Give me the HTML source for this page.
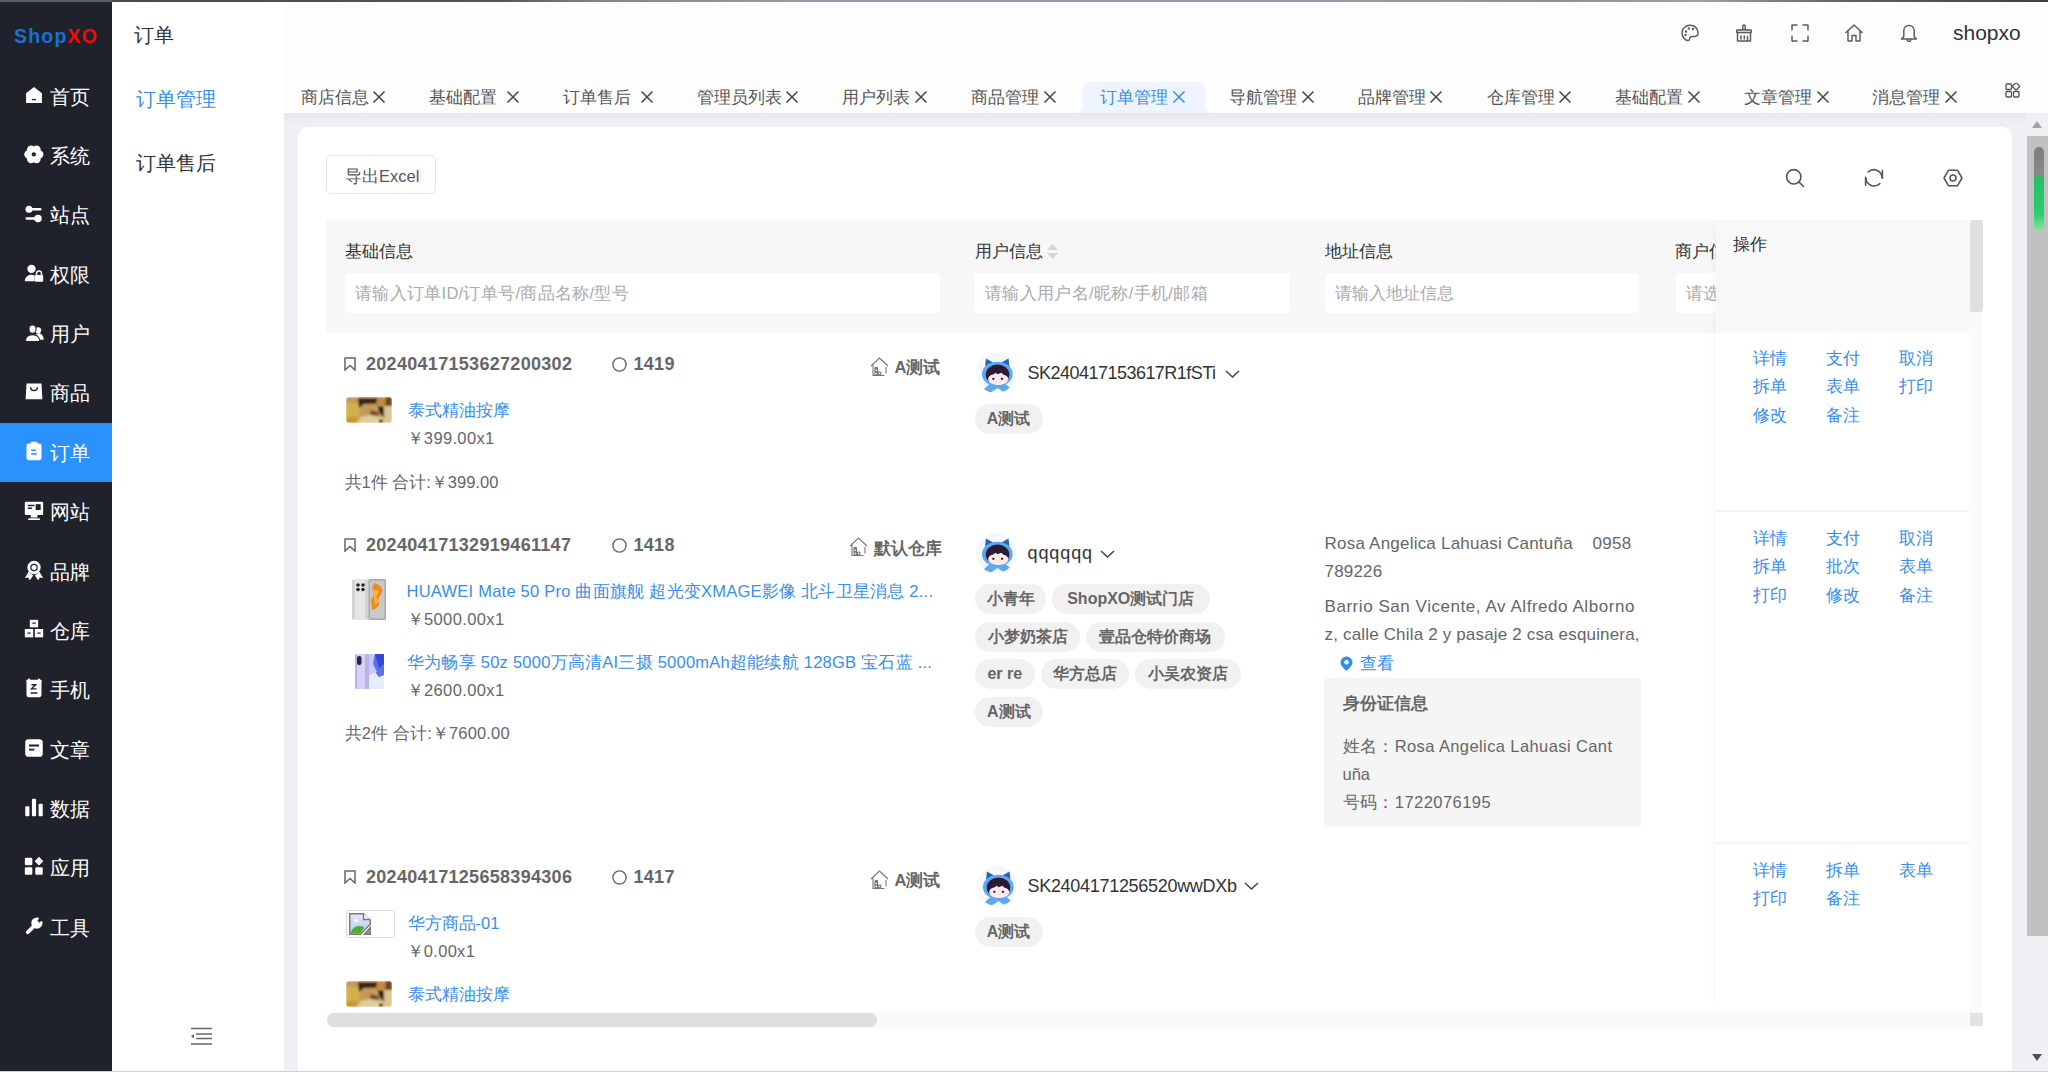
<!DOCTYPE html>
<html><head><meta charset="utf-8">
<style>
*{box-sizing:border-box;margin:0;padding:0}
html,body{width:2048px;height:1072px;overflow:hidden;background:#fff;font-family:"Liberation Sans",sans-serif;color:#333}
.a{position:absolute;white-space:nowrap}
#topline{left:0;top:0;width:2048px;height:2px;background:linear-gradient(90deg,#5a5d64 0,#5a5d64 112px,#4a4a4c 113px,#555 500px,#858585 600px,#9a98aa 800px,#9a98aa 1350px,#8f8f95 1550px,#a0a0a0 1700px,#606060 1850px,#404040 2048px)}
#botline{left:0;top:1071px;width:2048px;height:1px;background:#cfd0d2}
#side{left:0;top:2px;width:112px;height:1069px;background:#1f222b}
#logo{left:14px;top:23px;font-weight:bold;font-size:19.5px;letter-spacing:1.2px;-webkit-text-stroke:0}
.mi{left:0;width:112px;height:59.4px;color:#fff;font-size:20px}
.mi svg{position:absolute;left:23.5px;top:18px;width:20px;height:20px;fill:#fff}
.mi span{position:absolute;left:50px;top:18px;line-height:24px}
.mi.act{background:#2b91fd}
#sub{left:112px;top:2px;width:172px;height:1069px;background:#fff}
#hdr{left:284px;top:2px;width:1764px;height:111px;background:#fdfdfe}
#gray{left:284px;top:113px;width:1764px;height:958px;background:linear-gradient(#e8e8ec 0,#f0f0f4 12px)}
#card{left:298px;top:127px;width:1714px;height:960px;background:#fff;border-radius:10px}

.subt{font-size:20px;line-height:24px;color:#333}
.tab{top:86px;font-size:16.5px;line-height:22px;color:#555}
.tab .x{position:absolute;top:4px;width:14px;height:14px}
.hico{top:24px;width:18px;height:18px;fill:none;stroke:#5a5a5a;stroke-width:1.45;stroke-linecap:round;stroke-linejoin:round}

.t17{font-size:16.5px;line-height:22px}
.th{top:240px;font-size:16.5px;line-height:22px;color:#333}
.inp{top:273px;height:40px;background:#fff;border-radius:4px}
.ph{position:absolute;left:10px;top:9px;font-size:16.5px;line-height:22px;color:#aaa;white-space:nowrap}
.lk{color:#3a8ee6;font-size:16.5px;line-height:22px}
.gt{color:#666;font-size:16.5px;line-height:22px}
.onum{font-weight:bold;color:#666;font-size:18px;line-height:22px;letter-spacing:0.3px}
.tag{height:30px;border-radius:15px;background:#f1f1f1;color:#666;font-weight:bold;font-size:16px;line-height:30px;text-align:center}
.uname{font-size:18px;line-height:24px;color:#333}
</style></head><body>
<div class="a" id="topline"></div>
<div class="a" id="side">
  <div class="a" id="logo"><span style="color:#1670d6">Shop</span><span style="color:#f00a0a">XO</span></div>
  <div class="a mi" style="top:64.6px"><svg viewBox="0 0 24 24"><path d="M12 2.5 2.5 10v11.5h19V10z" /><path d="M9.5 17.5h5" stroke="#1f222b" stroke-width="1.6" fill="none"/></svg><span>首页</span></div>
  <div class="a mi" style="top:124.0px"><svg viewBox="0 0 24 24"><circle cx="18.30" cy="12.40" r="5"/><circle cx="15.05" cy="18.03" r="5"/><circle cx="8.55" cy="18.03" r="5"/><circle cx="5.30" cy="12.40" r="5"/><circle cx="8.55" cy="6.77" r="5"/><circle cx="15.05" cy="6.77" r="5"/><circle cx="11.8" cy="12.4" r="6.8"/><circle cx="11.8" cy="12.4" r="2.6" fill="#1f222b"/></svg><span>系统</span></div>
  <div class="a mi" style="top:183.3px"><svg viewBox="0 0 24 24"><circle cx="6" cy="7.4" r="4.2"/><rect x="6" y="5.9" width="15" height="3" rx="1.5"/><circle cx="16.8" cy="18.5" r="4.5"/><rect x="1.8" y="17" width="15" height="3" rx="1.5"/></svg><span>站点</span></div>
  <div class="a mi" style="top:242.7px"><svg viewBox="0 0 24 24"><circle cx="9" cy="7" r="5"/><path d="M1 22c0-5 3.5-8 8-8 1.5 0 2.8.3 3.8.9V22z"/><rect x="13" y="14.5" width="10" height="8" rx="1.2"/><path d="M15 14.5v-2a3 3 0 0 1 6 0v2" stroke="#fff" stroke-width="1.8" fill="none"/></svg><span>权限</span></div>
  <div class="a mi" style="top:302.0px"><svg viewBox="0 0 24 24"><g transform="translate(0 2.4)"><circle cx="16.9" cy="7.6" r="3.7"/><path d="M12 18.9C13 13.5 15.5 11.1 18 11.1S23.6 14 23.6 18.9z"/><g stroke="#1f222b" stroke-width="1.3"><ellipse cx="10.2" cy="6" rx="4.3" ry="5"/><path d="M1.7 21C1.7 15.2 5.5 12.7 10.25 12.7S18.8 15.2 18.8 21z"/></g></g></svg><span>用户</span></div>
  <div class="a mi" style="top:361.4px"><svg viewBox="0 0 24 24"><path d="M3 3h18l1 19H2z"/><path d="M8 7.5a4 4 0 0 0 8 0" stroke="#1f222b" stroke-width="1.8" fill="none"/></svg><span>商品</span></div>
  <div class="a mi act" style="top:420.8px"><svg viewBox="0 0 24 24"><rect x="3" y="3" width="18" height="20" rx="2.5"/><rect x="8" y="1" width="8" height="4" rx="1.5" fill="#fff"/><path d="M8.5 11h6M8.5 15.5h7" stroke="#2b91fd" stroke-width="1.8"/></svg><span>订单</span></div>
  <div class="a mi" style="top:480.1px"><svg viewBox="0 0 24 24"><rect x="1" y="2" width="22" height="16" rx="1.5"/><rect x="8" y="18" width="8" height="3"/><rect x="5" y="22" width="14" height="2"/><path d="M4.5 6.5h8M4.5 10h5" stroke="#1f222b" stroke-width="1.8"/><rect x="14" y="5" width="6" height="7" fill="#1f222b"/></svg><span>网站</span></div>
  <div class="a mi" style="top:539.5px"><svg viewBox="0 0 24 24"><circle cx="12" cy="9" r="8"/><circle cx="12" cy="9" r="4.5" fill="#1f222b"/><circle cx="12" cy="9" r="3"/><path d="M5.5 14 1 21.5l4-.5 2 3.5 4-6zM18.5 14 23 21.5l-4-.5-2 3.5-4-6z"/></svg><span>品牌</span></div>
  <div class="a mi" style="top:598.8px"><svg viewBox="0 0 24 24"><rect x="7" y="1" width="10" height="9"/><rect x="1" y="12" width="10" height="10"/><rect x="13" y="12" width="10" height="10"/><path d="M10 5h4M4 17h4M16 17h4" stroke="#1f222b" stroke-width="1.6"/></svg><span>仓库</span></div>
  <div class="a mi" style="top:658.2px"><svg viewBox="0 0 24 24"><rect x="3" y="2" width="18" height="21" rx="2.5"/><path d="M3 4 7 1M21 4 17 1" stroke="#fff" stroke-width="2"/><path d="M9 8h5l-5 5h6M8 18h8" stroke="#1f222b" stroke-width="1.7" fill="none"/></svg><span>手机</span></div>
  <div class="a mi" style="top:717.6px"><svg viewBox="0 0 24 24"><rect x="1.5" y="1.5" width="21" height="21" rx="4"/><path d="M6 9h12M6 14h6.5" stroke="#1f222b" stroke-width="2.2"/></svg><span>文章</span></div>
  <div class="a mi" style="top:776.9px"><svg viewBox="0 0 24 24"><rect x="1.5" y="11" width="5" height="12" rx="1.2"/><rect x="9.5" y="2" width="5" height="21" rx="1.2"/><rect x="17.5" y="8" width="5" height="15" rx="1.2"/></svg><span>数据</span></div>
  <div class="a mi" style="top:836.3px"><svg viewBox="0 0 24 24"><rect x="1" y="2" width="9" height="9" rx="1.5"/><rect x="1" y="13.5" width="9" height="9" rx="1.5"/><rect x="13.5" y="13.5" width="9" height="9" rx="1.5"/><path d="M18 1l5.2 5.2L18 11.4l-5.2-5.2z"/></svg><span>应用</span></div>
  <div class="a mi" style="top:895.6px"><svg viewBox="0 0 24 24"><path d="M4.5 19.5 12.5 11.5" stroke="#fff" stroke-width="4.6" stroke-linecap="round"/><circle cx="15.5" cy="8.5" r="6.8"/><path d="M20 1.5 16 5.5 18.5 8 22.5 4z" fill="#1f222b"/><circle cx="21" cy="3" r="3.2" fill="#1f222b"/></svg><span>工具</span></div>
</div>
<div class="a" id="sub">
  <div class="a subt" style="left:22px;top:21px">订单</div>
  <div class="a subt" style="left:24px;top:84.5px;color:#3a8ee6">订单管理</div>
  <div class="a subt" style="left:24px;top:149px">订单售后</div>
  <svg class="a" style="left:78px;top:1025px;width:23px;height:18px" viewBox="0 0 23 18"><path d="M1 1.5h21M6 7h16M6 11.5h16M1 17h21" stroke="#666" stroke-width="1.6"/><path d="M1 9.2 4 7v4.4z" fill="#666"/></svg>
</div>
<div class="a" id="hdr"></div>
<div class="a" style="left:1083px;top:82px;width:122px;height:31px;background:#edf4fe;border-radius:8px 8px 0 0"></div>
<div class="a" style="left:1075px;top:105px;width:8px;height:8px;background:radial-gradient(circle at 0 0,transparent 8px,#edf4fe 8px)"></div>
<div class="a" style="left:1205px;top:105px;width:8px;height:8px;background:radial-gradient(circle at 100% 0,transparent 8px,#edf4fe 8px)"></div>
<div class="a tab" style="left:300.7px">商店信息<svg class="x" style="left:71.3px" viewBox="0 0 14 14"><path d="M1.5 1.5l11 11M12.5 1.5l-11 11" stroke="#444" stroke-width="1.5"/></svg></div>
<div class="a tab" style="left:429.0px">基础配置<svg class="x" style="left:77.0px" viewBox="0 0 14 14"><path d="M1.5 1.5l11 11M12.5 1.5l-11 11" stroke="#444" stroke-width="1.5"/></svg></div>
<div class="a tab" style="left:563.0px">订单售后<svg class="x" style="left:76.6px" viewBox="0 0 14 14"><path d="M1.5 1.5l11 11M12.5 1.5l-11 11" stroke="#444" stroke-width="1.5"/></svg></div>
<div class="a tab" style="left:696.8px">管理员列表<svg class="x" style="left:88.2px" viewBox="0 0 14 14"><path d="M1.5 1.5l11 11M12.5 1.5l-11 11" stroke="#444" stroke-width="1.5"/></svg></div>
<div class="a tab" style="left:842.0px">用户列表<svg class="x" style="left:72.0px" viewBox="0 0 14 14"><path d="M1.5 1.5l11 11M12.5 1.5l-11 11" stroke="#444" stroke-width="1.5"/></svg></div>
<div class="a tab" style="left:971.0px">商品管理<svg class="x" style="left:72.0px" viewBox="0 0 14 14"><path d="M1.5 1.5l11 11M12.5 1.5l-11 11" stroke="#444" stroke-width="1.5"/></svg></div>
<div class="a tab" style="left:1100.0px;color:#3a8ee6">订单管理<svg class="x" style="left:71.6px" viewBox="0 0 14 14"><path d="M1.5 1.5l11 11M12.5 1.5l-11 11" stroke="#3a8ee6" stroke-width="1.5"/></svg></div>
<div class="a tab" style="left:1229.0px">导航管理<svg class="x" style="left:71.5px" viewBox="0 0 14 14"><path d="M1.5 1.5l11 11M12.5 1.5l-11 11" stroke="#444" stroke-width="1.5"/></svg></div>
<div class="a tab" style="left:1358.0px">品牌管理<svg class="x" style="left:71.0px" viewBox="0 0 14 14"><path d="M1.5 1.5l11 11M12.5 1.5l-11 11" stroke="#444" stroke-width="1.5"/></svg></div>
<div class="a tab" style="left:1487.0px">仓库管理<svg class="x" style="left:70.5px" viewBox="0 0 14 14"><path d="M1.5 1.5l11 11M12.5 1.5l-11 11" stroke="#444" stroke-width="1.5"/></svg></div>
<div class="a tab" style="left:1615.0px">基础配置<svg class="x" style="left:71.8px" viewBox="0 0 14 14"><path d="M1.5 1.5l11 11M12.5 1.5l-11 11" stroke="#444" stroke-width="1.5"/></svg></div>
<div class="a tab" style="left:1743.8px">文章管理<svg class="x" style="left:72.0px" viewBox="0 0 14 14"><path d="M1.5 1.5l11 11M12.5 1.5l-11 11" stroke="#444" stroke-width="1.5"/></svg></div>
<div class="a tab" style="left:1872.0px">消息管理<svg class="x" style="left:72.0px" viewBox="0 0 14 14"><path d="M1.5 1.5l11 11M12.5 1.5l-11 11" stroke="#444" stroke-width="1.5"/></svg></div>
<svg class="a" style="left:2005px;top:82.5px;width:15px;height:15px" viewBox="0 0 15 15" fill="none" stroke="#555" stroke-width="1.3"><rect x="1" y="8.5" width="5.5" height="5.5" rx="1"/><rect x="8.5" y="8.5" width="5.5" height="5.5" rx="1"/><rect x="1" y="1" width="5.5" height="5.5" rx="1"/><rect x="8.2" y="0.6" width="5.5" height="5.5" rx="1" transform="rotate(45 11 3.5)"/></svg>
<svg class="a hico" style="left:1681px" viewBox="0 0 18 18"><path d="M9 1.2C4.6 1.2 1 4.6 1 8.8c0 4 3 7.8 6.3 7.8 1.4 0 1.2-1.6 1.5-2.5.4-1.2 1.4-1.7 2.6-1.7h2.3c2 0 3.4-1.5 3.4-3.6C17.1 4.5 13.5 1.2 9 1.2z"/><circle cx="5" cy="7.5" r=".5"/><circle cx="7.8" cy="4.5" r=".5"/><circle cx="12" cy="5" r=".5"/><circle cx="4.5" cy="11" r=".5"/></svg>
<svg class="a hico" style="left:1735px" viewBox="0 0 18 18"><path d="M7.8 6V2.2a1.2 1.2 0 0 1 2.4 0V6M1.8 8.5V6h14.4v2.5zM2.5 8.5v8.5h13v-8.5M6 12v3M9.3 12v3M12.5 12.5V17"/></svg>
<svg class="a hico" style="left:1790.5px" viewBox="0 0 18 18"><path d="M1 6V1h5M12 1h5v5M17 12v5h-5M6 17H1v-5"/></svg>
<svg class="a hico" style="left:1845px" viewBox="0 0 18 18"><path d="M1 8.5 9 1l8 7.5M3 7v10h4v-5.5h4V17h4V7"/></svg>
<svg class="a hico" style="left:1900px" viewBox="0 0 18 18"><path d="M9 1.5c-3 0-5.2 2.3-5.2 5.3v5.8L1.6 15h14.8l-2.2-2.4V6.8C14.2 3.8 12 1.5 9 1.5zM7.3 16.2a1.8 1.8 0 0 0 3.4 0"/></svg>
<div class="a" style="left:1953px;top:19px;font-size:21px;line-height:28px;color:#333">shopxo</div>
<div class="a" id="gray"></div>
<div class="a" id="card"></div>

<!-- toolbar -->
<div class="a" style="left:326px;top:155px;width:110px;height:39px;border:1px solid #e3e3e3;border-radius:5px"></div>
<div class="a t17" style="left:345px;top:165px;color:#555">导出Excel</div>
<svg class="a" style="left:1785px;top:168px;width:20px;height:20px" viewBox="0 0 20 20" fill="none" stroke="#555" stroke-width="1.6" stroke-linecap="round"><circle cx="8.8" cy="8.8" r="7.2"/><path d="M14 14l4.5 4.5"/></svg>
<svg class="a" style="left:1864px;top:168px;width:20px;height:20px" viewBox="0 0 20 20" fill="none" stroke="#555" stroke-width="1.6" stroke-linecap="round"><path d="M4.2 4A8.2 8.2 0 0 1 18 9.2"/><path d="M18.4 2.6V10.3"/><path d="M15.8 15.6A8.2 8.2 0 0 1 1.9 10.6"/><path d="M1.6 9.4V17.3"/></svg>
<svg class="a" style="left:1943px;top:168px;width:20px;height:20px" viewBox="0 0 20 20" fill="none" stroke="#555" stroke-width="1.6"><path d="M5.5 2.2h9L19 10l-4.5 7.8h-9L1 10z"/><circle cx="10" cy="10" r="3"/></svg>
<!-- table header -->
<div class="a" style="left:326px;top:220px;width:1642px;height:113px;background:#f7f7f7"></div>
<div class="a th" style="left:344.5px">基础信息</div>
<div class="a th" style="left:975px">用户信息</div>
<svg class="a" style="left:1046px;top:243px;width:13px;height:17px" viewBox="0 0 13 17" fill="#d6d6d6"><path d="M6.5 1 12 7H1zM6.5 16 12 10H1z"/></svg>
<div class="a th" style="left:1325px">地址信息</div>
<div class="a inp" style="left:345px;width:595px"><span class="ph" style="letter-spacing:0.3px">请输入订单ID/订单号/商品名称/型号</span></div>
<div class="a inp" style="left:975px;width:314px"><span class="ph" style="letter-spacing:0.35px">请输入用户名/昵称/手机/邮箱</span></div>
<div class="a inp" style="left:1325px;width:314px"><span class="ph">请输入地址信息</span></div>
<div class="a" style="left:1657px;top:220px;width:59px;height:113px;overflow:hidden">
  <div class="a th" style="left:18px;top:20px">商户信息</div>
  <div class="a inp" style="left:19px;top:53px;width:200px"><span class="ph">请选择</span></div>
</div>
<!-- rows -->
<div class="a" id="rows" style="left:0;top:0;width:2048px;height:1012px;overflow:hidden">
<svg class="a" style="left:344px;top:357px;width:12px;height:14px" viewBox="0 0 12 14" fill="none" stroke="#666" stroke-width="1.5"><path d="M1 1h10v12L6 8.5 1 13z"/></svg>
<div class="a onum" style="left:366px;top:353px">20240417153627200302</div>
<svg class="a" style="left:611.5px;top:357px;width:15px;height:15px" viewBox="0 0 15 15" fill="none" stroke="#666" stroke-width="1.4"><circle cx="7.5" cy="7.5" r="6.6"/></svg>
<div class="a onum" style="left:633.5px;top:353px">1419</div>
<svg class="a" style="left:870px;top:356.5px;width:19px;height:19px" viewBox="0 0 19 19" fill="none" stroke="#777" stroke-width="1.1"><path d="M1 9 9.5 1 18 9M3 7.5V18.5h11.5M16 10v6.5"/><rect x="5" y="12" width="2.5" height="2.5"/><rect x="5" y="15.2" width="2.5" height="2.5"/><rect x="8.3" y="15.2" width="2.5" height="2.5"/><rect x="5.3" y="10.5" width="2" height="1.2"/></svg>
<div class="a" style="left:894.5px;top:356px;font-weight:bold;color:#666;font-size:16.5px;line-height:22px">A测试</div>
<svg class="a" style="left:346px;top:397px;width:46px;height:26px" viewBox="0 0 46 26"><defs><clipPath id="c1"><rect width="46" height="26" rx="3"/></clipPath><filter id="f1" x="-5%" y="-5%" width="110%" height="110%"><feGaussianBlur stdDeviation="0.8"/></filter></defs><g clip-path="url(#c1)"><g filter="url(#f1)"><rect width="46" height="26" fill="#c39a5c"/><path d="M0 6h15l-3 20H0z" fill="#d3b04c"/><path d="M0 20h12l-2 6H0z" fill="#c8962e"/><path d="M12 1h20l-2 6H18l-5 4z" fill="#3b2612"/><path d="M31 0h9l-1 8h-8z" fill="#c88b3d"/><path d="M40 0h6v9h-7z" fill="#6b4a22"/><path d="M32 9l6 1 4 9-4 2-5-6z" fill="#2e1c10"/><path d="M24 13l8 2 2 5-9 2z" fill="#7a4a30"/><path d="M14 20l10-2 14 2 2 6H12z" fill="#e0cc98"/><path d="M38 9h8v17h-6l-2-8z" fill="#dac391"/><circle cx="35" cy="24" r="2" fill="#3a2614"/></g></g></svg>
<div class="a lk" style="left:407.5px;top:399px">泰式精油按摩</div>
<div class="a gt" style="left:406.5px;top:427px;letter-spacing:0.35px">￥399.00x1</div>
<div class="a gt" style="left:344.5px;top:470.5px">共1件 合计:￥399.00</div>
<div class="a" style="left:976px;top:353px;width:40px;height:40px;border-radius:20px;background:#f4f8fd;overflow:hidden">
<svg style="position:absolute;left:0;top:0;width:40px;height:40px" viewBox="0 0 40 40"><path d="M9 14 10 5.5 17 9.5z" fill="#2a64ad"/><path d="M33.5 14 32.5 5.5 25.5 9.5z" fill="#2a64ad"/><ellipse cx="21.3" cy="21" rx="15.4" ry="12.3" fill="#5ca9f3"/><path d="M7.5 36.5 14.5 30h14l7.5 6.5-7 3.5-7.5-5-7.5 5z" fill="#5ca9f3"/><ellipse cx="21.5" cy="21.5" rx="11.8" ry="10" fill="#2c1b32"/><path d="M12.2 26c0-2.5 2.2-4.3 5-4.5l2.5-1.8 1.8 1.6 4-1.5 2 2c2.8.3 4.7 2 4.7 4.2 0 3.7-4.5 6-10 6s-10-2.3-10-6z" fill="#fce8e8"/><circle cx="17.3" cy="25.8" r="1.15" fill="#1a1a1a"/><circle cx="26" cy="25.8" r="1.15" fill="#1a1a1a"/></svg></div>
<div class="a uname" style="left:1027.5px;top:361px;letter-spacing:-0.52px">SK240417153617R1fSTi</div>
<svg class="a" style="left:1224.5px;top:369.5px;width:15px;height:8px" viewBox="0 0 15 8" fill="none" stroke="#444" stroke-width="1.5"><path d="M1 1l6.5 6L14 1"/></svg>
<div class="a tag" style="left:974.5px;top:403.5px;width:68px">A测试</div>
<svg class="a" style="left:344px;top:537.5px;width:12px;height:14px" viewBox="0 0 12 14" fill="none" stroke="#666" stroke-width="1.5"><path d="M1 1h10v12L6 8.5 1 13z"/></svg>
<div class="a onum" style="left:366px;top:533.5px">20240417132919461147</div>
<svg class="a" style="left:611.5px;top:537.5px;width:15px;height:15px" viewBox="0 0 15 15" fill="none" stroke="#666" stroke-width="1.4"><circle cx="7.5" cy="7.5" r="6.6"/></svg>
<div class="a onum" style="left:633.5px;top:533.5px">1418</div>
<svg class="a" style="left:849px;top:537px;width:19px;height:19px" viewBox="0 0 19 19" fill="none" stroke="#777" stroke-width="1.1"><path d="M1 9 9.5 1 18 9M3 7.5V18.5h11.5M16 10v6.5"/><rect x="5" y="12" width="2.5" height="2.5"/><rect x="5" y="15.2" width="2.5" height="2.5"/><rect x="8.3" y="15.2" width="2.5" height="2.5"/><rect x="5.3" y="10.5" width="2" height="1.2"/></svg>
<div class="a" style="left:873.5px;top:536.5px;font-weight:bold;color:#666;font-size:16.5px;line-height:22px">默认仓库</div>
<svg class="a" style="left:351.5px;top:579px;width:34px;height:41px" viewBox="0 0 34 41"><rect x="0" y="0.5" width="17" height="40" rx="1.5" fill="#d4d4d4"/><rect x="3" y="0.5" width="10" height="40" fill="#e6e6e6"/><circle cx="6" cy="6" r="1.8" fill="#222"/><circle cx="11" cy="6" r="1.8" fill="#222"/><circle cx="6" cy="10.5" r="1.8" fill="#222"/><circle cx="11" cy="10.5" r="1.8" fill="#222"/><rect x="16.5" y="0" width="17.5" height="41" rx="1.5" fill="#a9a9a9"/><rect x="18" y="1.5" width="14.5" height="38" fill="#c9c9c9"/><path d="M22 4c5 1 9 4 8 9-1 4-4 4-3 9 1 5-3 8-7 9l-1-10 3-6-2-5z" fill="#f08a1c"/><path d="M21 10l6 2-3 6 4 4-5 4z" fill="#f7b445"/></svg>
<div class="a lk" style="left:406.5px;top:580px;letter-spacing:0.24px">HUAWEI Mate 50 Pro 曲面旗舰 超光变XMAGE影像 北斗卫星消息 2...</div>
<div class="a gt" style="left:406.5px;top:608px;letter-spacing:0.4px">￥5000.00x1</div>
<svg class="a" style="left:354.5px;top:653.5px;width:29px;height:35px" viewBox="0 0 29 35"><rect x="0" y="0" width="14.5" height="35" rx="1.5" fill="#b9b0ec"/><rect x="2" y="0" width="8" height="35" fill="#d7d0f6"/><rect x="2" y="2" width="4.5" height="9" rx="2" fill="#2a2540"/><rect x="14" y="0" width="15" height="35" rx="1" fill="#5f6fe6"/><path d="M14 0h6l-2 10 4 8-8 3z" fill="#c7c8f5"/><path d="M14 21l6-3 4 5 5-2v14H14z" fill="#e6ecfb"/><path d="M20 0h9v10l-5 4z" fill="#3347d8"/></svg>
<div class="a lk" style="left:407px;top:651px;letter-spacing:0.24px">华为畅享 50z 5000万高清AI三摄 5000mAh超能续航 128GB 宝石蓝 ...</div>
<div class="a gt" style="left:406.5px;top:679px;letter-spacing:0.4px">￥2600.00x1</div>
<div class="a gt" style="left:344.5px;top:721.5px;letter-spacing:0.15px">共2件 合计:￥7600.00</div>
<div class="a" style="left:976px;top:533px;width:40px;height:40px;border-radius:20px;background:#f4f8fd;overflow:hidden">
<svg style="position:absolute;left:0;top:0;width:40px;height:40px" viewBox="0 0 40 40"><path d="M9 14 10 5.5 17 9.5z" fill="#2a64ad"/><path d="M33.5 14 32.5 5.5 25.5 9.5z" fill="#2a64ad"/><ellipse cx="21.3" cy="21" rx="15.4" ry="12.3" fill="#5ca9f3"/><path d="M7.5 36.5 14.5 30h14l7.5 6.5-7 3.5-7.5-5-7.5 5z" fill="#5ca9f3"/><ellipse cx="21.5" cy="21.5" rx="11.8" ry="10" fill="#2c1b32"/><path d="M12.2 26c0-2.5 2.2-4.3 5-4.5l2.5-1.8 1.8 1.6 4-1.5 2 2c2.8.3 4.7 2 4.7 4.2 0 3.7-4.5 6-10 6s-10-2.3-10-6z" fill="#fce8e8"/><circle cx="17.3" cy="25.8" r="1.15" fill="#1a1a1a"/><circle cx="26" cy="25.8" r="1.15" fill="#1a1a1a"/></svg></div>
<div class="a uname" style="left:1027.5px;top:541px;letter-spacing:0.9px">qqqqqq</div>
<svg class="a" style="left:1099.5px;top:549.5px;width:15px;height:8px" viewBox="0 0 15 8" fill="none" stroke="#444" stroke-width="1.5"><path d="M1 1l6.5 6L14 1"/></svg>
<div class="a tag" style="left:975px;top:583.5px;width:71px">小青年</div>
<div class="a tag" style="left:1052px;top:583.5px;width:157.5px">ShopXO测试门店</div>
<div class="a tag" style="left:975px;top:621.5px;width:105px">小梦奶茶店</div>
<div class="a tag" style="left:1086px;top:621.5px;width:138.7px">壹品仓特价商场</div>
<div class="a tag" style="left:975px;top:659px;width:59.6px">er re</div>
<div class="a tag" style="left:1040.5px;top:659px;width:88.5px">华方总店</div>
<div class="a tag" style="left:1135px;top:659px;width:106px">小吴农资店</div>
<div class="a tag" style="left:975px;top:696.5px;width:67.8px">A测试</div>
<div class="a gt" style="left:1324.5px;top:533px;font-size:17px;letter-spacing:0.22px">Rosa Angelica Lahuasi Cantuña&nbsp;&nbsp;&nbsp;&nbsp;0958</div>
<div class="a gt" style="left:1324.5px;top:561px;font-size:17px;letter-spacing:0.2px">789226</div>
<div class="a gt" style="left:1324.5px;top:596px;font-size:17px;letter-spacing:0.55px">Barrio San Vicente, Av Alfredo Alborno</div>
<div class="a gt" style="left:1324.5px;top:624px;font-size:17px;letter-spacing:0.17px">z, calle Chila 2 y pasaje 2 csa esquinera,</div>
<svg class="a" style="left:1340px;top:656px;width:13px;height:15px" viewBox="0 0 13 15"><path d="M6.5 0.5a6 6 0 0 0-6 6c0 3.8 6 8.3 6 8.3s6-4.5 6-8.3a6 6 0 0 0-6-6z" fill="#2f8ee6"/><circle cx="6.5" cy="6.3" r="2.3" fill="#fff"/></svg>
<div class="a lk" style="left:1360px;top:652px">查看</div>
<div class="a" style="left:1324px;top:678px;width:317px;height:149px;background:#f5f5f5;border-radius:4px"></div>
<div class="a" style="left:1342.5px;top:692px;font-weight:bold;color:#666;font-size:16.5px;line-height:22px">身份证信息</div>
<div class="a gt" style="left:1342.5px;top:735px;letter-spacing:0.4px">姓名：Rosa Angelica Lahuasi Cant</div>
<div class="a gt" style="left:1342.5px;top:763px">uña</div>
<div class="a gt" style="left:1342.5px;top:791px;letter-spacing:0.45px">号码：1722076195</div>
<svg class="a" style="left:344px;top:870px;width:12px;height:14px" viewBox="0 0 12 14" fill="none" stroke="#666" stroke-width="1.5"><path d="M1 1h10v12L6 8.5 1 13z"/></svg>
<div class="a onum" style="left:366px;top:866px">20240417125658394306</div>
<svg class="a" style="left:611.5px;top:870px;width:15px;height:15px" viewBox="0 0 15 15" fill="none" stroke="#666" stroke-width="1.4"><circle cx="7.5" cy="7.5" r="6.6"/></svg>
<div class="a onum" style="left:633.5px;top:866px">1417</div>
<svg class="a" style="left:870px;top:869.5px;width:19px;height:19px" viewBox="0 0 19 19" fill="none" stroke="#777" stroke-width="1.1"><path d="M1 9 9.5 1 18 9M3 7.5V18.5h11.5M16 10v6.5"/><rect x="5" y="12" width="2.5" height="2.5"/><rect x="5" y="15.2" width="2.5" height="2.5"/><rect x="8.3" y="15.2" width="2.5" height="2.5"/><rect x="5.3" y="10.5" width="2" height="1.2"/></svg>
<div class="a" style="left:894.5px;top:869px;font-weight:bold;color:#666;font-size:16.5px;line-height:22px">A测试</div>
<div class="a" style="left:345.5px;top:909.5px;width:49px;height:28px;border:1.5px solid #dcdcdc;border-radius:1px;background:#fff"></div>
<svg class="a" style="left:349px;top:913px;width:22px;height:22px" viewBox="0 0 22 22"><defs><linearGradient id="sky" x1="0" y1="0" x2="0" y2="1"><stop offset="0" stop-color="#e4e6fb"/><stop offset="0.6" stop-color="#c8d4f6"/><stop offset="1" stop-color="#bfe3ee"/></linearGradient></defs><path d="M0.7 0.7H14.5L21.3 7.2V11.3L11.6 21.3H0.7z" fill="url(#sky)" stroke="#7a7a7a" stroke-width="1.4"/><path d="M14.5 0.7V6.5H21.3" fill="#fff" stroke="#7a7a7a" stroke-width="1.4"/><path d="M4 8.5l3.5-3 3 3z" fill="#fff"/><path d="M1.4 20.6c1-5 5-7.5 9-7.5 2 0 4 .6 5 1.6l-4.2 5.9z" fill="#4fae3a"/><path d="M15.4 21.3L21.3 14.6V21.3z" fill="#6bbf4e" stroke="#7a7a7a" stroke-width="1.4"/></svg>
<div class="a lk" style="left:407.5px;top:912px">华方商品-01</div>
<div class="a gt" style="left:406.5px;top:940px;letter-spacing:0.3px">￥0.00x1</div>
<svg class="a" style="left:345.5px;top:981px;width:46px;height:26px" viewBox="0 0 46 26"><defs><clipPath id="c2"><rect width="46" height="26" rx="3"/></clipPath><filter id="f2" x="-5%" y="-5%" width="110%" height="110%"><feGaussianBlur stdDeviation="0.8"/></filter></defs><g clip-path="url(#c2)"><g filter="url(#f2)"><rect width="46" height="26" fill="#c39a5c"/><path d="M0 6h15l-3 20H0z" fill="#d3b04c"/><path d="M0 20h12l-2 6H0z" fill="#c8962e"/><path d="M12 1h20l-2 6H18l-5 4z" fill="#3b2612"/><path d="M31 0h9l-1 8h-8z" fill="#c88b3d"/><path d="M40 0h6v9h-7z" fill="#6b4a22"/><path d="M32 9l6 1 4 9-4 2-5-6z" fill="#2e1c10"/><path d="M24 13l8 2 2 5-9 2z" fill="#7a4a30"/><path d="M14 20l10-2 14 2 2 6H12z" fill="#e0cc98"/><path d="M38 9h8v17h-6l-2-8z" fill="#dac391"/><circle cx="35" cy="24" r="2" fill="#3a2614"/></g></g></svg>
<div class="a lk" style="left:407.5px;top:983px">泰式精油按摩</div>
<div class="a" style="left:977px;top:866px;width:40px;height:40px;border-radius:20px;background:#f4f8fd;overflow:hidden">
<svg style="position:absolute;left:0;top:0;width:40px;height:40px" viewBox="0 0 40 40"><path d="M9 14 10 5.5 17 9.5z" fill="#2a64ad"/><path d="M33.5 14 32.5 5.5 25.5 9.5z" fill="#2a64ad"/><ellipse cx="21.3" cy="21" rx="15.4" ry="12.3" fill="#5ca9f3"/><path d="M7.5 36.5 14.5 30h14l7.5 6.5-7 3.5-7.5-5-7.5 5z" fill="#5ca9f3"/><ellipse cx="21.5" cy="21.5" rx="11.8" ry="10" fill="#2c1b32"/><path d="M12.2 26c0-2.5 2.2-4.3 5-4.5l2.5-1.8 1.8 1.6 4-1.5 2 2c2.8.3 4.7 2 4.7 4.2 0 3.7-4.5 6-10 6s-10-2.3-10-6z" fill="#fce8e8"/><circle cx="17.3" cy="25.8" r="1.15" fill="#1a1a1a"/><circle cx="26" cy="25.8" r="1.15" fill="#1a1a1a"/></svg></div>
<div class="a uname" style="left:1027.5px;top:874px;letter-spacing:-0.3px">SK2404171256520wwDXb</div>
<svg class="a" style="left:1244px;top:882px;width:15px;height:8px" viewBox="0 0 15 8" fill="none" stroke="#444" stroke-width="1.5"><path d="M1 1l6.5 6L14 1"/></svg>
<div class="a tag" style="left:974.5px;top:916.5px;width:68px">A测试</div>
</div>
<!-- fixed action column -->
<div class="a" style="left:1716px;top:220px;width:253px;height:789px;background:#fff;box-shadow:-6px 0 8px -6px rgba(0,0,0,0.06)"></div>
<div class="a" style="left:1716px;top:220px;width:253px;height:113px;background:#f8f8f8"></div>
<div class="a" style="left:1716px;top:510px;width:253px;height:2px;background:#f6f6f6"></div>
<div class="a" style="left:1716px;top:842px;width:253px;height:2px;background:#f6f6f6"></div>
<div class="a th" style="left:1733px;top:233px">操作</div>
<div class="a lk" style="left:1752.5px;top:347.0px">详情</div>
<div class="a lk" style="left:1825.5px;top:347.0px">支付</div>
<div class="a lk" style="left:1898.5px;top:347.0px">取消</div>
<div class="a lk" style="left:1752.5px;top:375.3px">拆单</div>
<div class="a lk" style="left:1825.5px;top:375.3px">表单</div>
<div class="a lk" style="left:1898.5px;top:375.3px">打印</div>
<div class="a lk" style="left:1752.5px;top:403.6px">修改</div>
<div class="a lk" style="left:1825.5px;top:403.6px">备注</div>
<div class="a lk" style="left:1752.5px;top:527.0px">详情</div>
<div class="a lk" style="left:1825.5px;top:527.0px">支付</div>
<div class="a lk" style="left:1898.5px;top:527.0px">取消</div>
<div class="a lk" style="left:1752.5px;top:555.3px">拆单</div>
<div class="a lk" style="left:1825.5px;top:555.3px">批次</div>
<div class="a lk" style="left:1898.5px;top:555.3px">表单</div>
<div class="a lk" style="left:1752.5px;top:583.6px">打印</div>
<div class="a lk" style="left:1825.5px;top:583.6px">修改</div>
<div class="a lk" style="left:1898.5px;top:583.6px">备注</div>
<div class="a lk" style="left:1752.5px;top:859.0px">详情</div>
<div class="a lk" style="left:1825.5px;top:859.0px">拆单</div>
<div class="a lk" style="left:1898.5px;top:859.0px">表单</div>
<div class="a lk" style="left:1752.5px;top:887.3px">打印</div>
<div class="a lk" style="left:1825.5px;top:887.3px">备注</div>

<!-- table v scrollbar -->
<div class="a" style="left:1969px;top:220px;width:13px;height:793px;background:#fafafa"></div>
<div class="a" style="left:1970px;top:220px;width:13px;height:92px;background:#e0e0e0;border-radius:3px"></div>
<!-- h scrollbar -->
<div class="a" style="left:327px;top:1012px;width:1642px;height:16px;background:#f9f9f9"></div>
<div class="a" style="left:327px;top:1013px;width:550px;height:14px;background:#dedede;border-radius:7px"></div>
<div class="a" style="left:1970px;top:1013px;width:13px;height:13px;background:#e3e3e3"></div>
<!-- page scrollbar -->
<div class="a" style="left:2027px;top:113px;width:21px;height:958px;background:#f0f0f4"></div>
<div class="a" style="left:2027px;top:136px;width:21px;height:800px;background:#c1c1c1"></div>
<div class="a" style="left:2034px;top:147px;width:9.5px;height:84px;border-radius:5px;background:linear-gradient(#7d7d7d 0,#8a8a8a 34%,#22c063 36%,#2ecc71 80%,#8be89a 100%)"></div>
<svg class="a" style="left:2031px;top:120px;width:12px;height:9px" viewBox="0 0 12 9"><path d="M6 1l5 7H1z" fill="#a3a3a3"/></svg>
<svg class="a" style="left:2031px;top:1053px;width:12px;height:9px" viewBox="0 0 12 9"><path d="M6 8 11 1H1z" fill="#505050"/></svg>
<div class="a" id="botline"></div>
</body></html>
